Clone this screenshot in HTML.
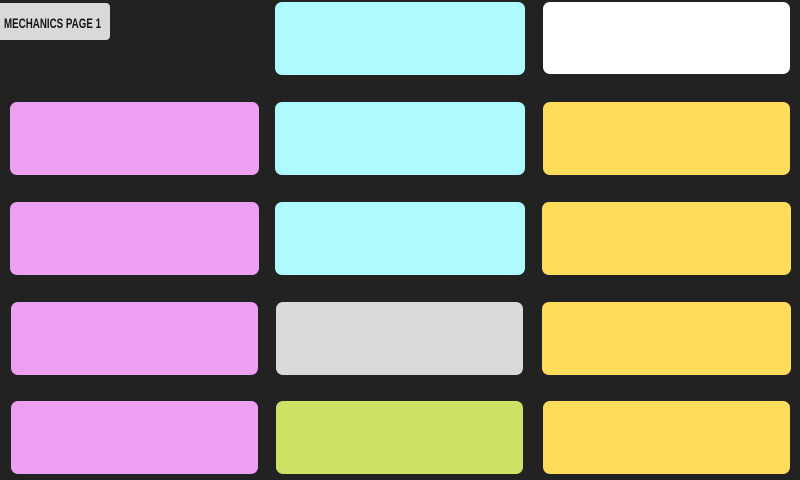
<!DOCTYPE html>
<html><head><style>
body{margin:0;width:800px;height:480px;background:#222222;position:relative;overflow:hidden}
.b{position:absolute;border-radius:7px}
.p{background:#eda0f2}.c{background:#adfbff}.y{background:#fedc5a}
.l{position:absolute;left:0;top:3px;width:110px;height:37px;background:#d9d9d9;border-radius:0 4px 4px 0}
</style></head><body>
<div class="l"><svg width="110" height="37" style="display:block"><text x="4" y="25" font-family="Liberation Sans, sans-serif" font-weight="bold" font-size="14" fill="#151515" textLength="97" lengthAdjust="spacingAndGlyphs">MECHANICS PAGE 1</text></svg></div>
<div class="b c" style="left:275px;top:2px;width:250px;height:73px"></div>
<div class="b" style="left:543px;top:2px;width:247px;height:72px;background:#fff"></div>
<div class="b p" style="left:10px;top:102px;width:249px;height:73px"></div>
<div class="b c" style="left:275px;top:102px;width:250px;height:73px"></div>
<div class="b y" style="left:543px;top:102px;width:247px;height:73px"></div>
<div class="b p" style="left:10px;top:202px;width:249px;height:73px"></div>
<div class="b c" style="left:275px;top:202px;width:250px;height:73px"></div>
<div class="b y" style="left:542px;top:202px;width:249px;height:73px"></div>
<div class="b p" style="left:11px;top:302px;width:247px;height:73px"></div>
<div class="b" style="left:276px;top:302px;width:247px;height:73px;background:#d9d9d9"></div>
<div class="b y" style="left:542px;top:302px;width:249px;height:73px"></div>
<div class="b p" style="left:11px;top:401px;width:247px;height:73px"></div>
<div class="b" style="left:276px;top:401px;width:247px;height:73px;background:#cbe265"></div>
<div class="b y" style="left:543px;top:401px;width:247px;height:73px"></div>
</body></html>
